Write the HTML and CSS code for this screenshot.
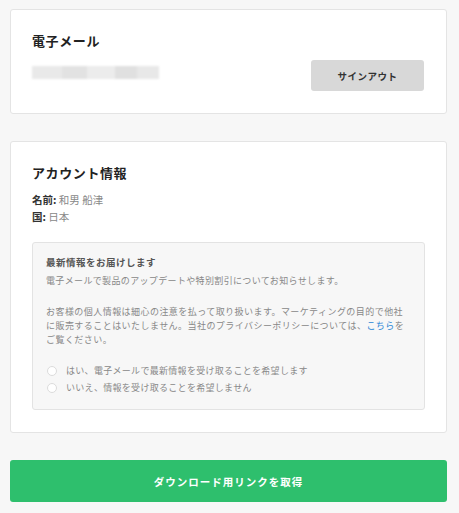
FILE: index.html
```html
<!DOCTYPE html>
<html lang="ja">
<head>
<meta charset="utf-8">
<title>アカウント</title>
<link rel="stylesheet" href="styles.css">
</head>
<body>
<main class="page">
  <section class="card">
    <h2 class="card-title">電子メール</h2>
    <div class="email-row">
      <div class="email-blur" aria-label="メールアドレス（非表示）">
        <span class="b1"></span><span class="b2"></span><span class="b3"></span><span class="b4"></span><span class="b5"></span>
      </div>
      <button class="btn-signout" type="button">サインアウト</button>
    </div>
  </section>

  <section class="card card-account">
    <h2 class="card-title">アカウント情報</h2>
    <p class="info-line"><strong>名前:</strong> 和男 船津</p>
    <p class="info-line"><strong>国:</strong> 日本</p>

    <div class="news-box">
      <h3 class="news-title">最新情報をお届けします</h3>
      <p class="news-desc">電子メールで製品のアップデートや特別割引についてお知らせします。</p>
      <p class="news-privacy">お客様の個人情報は細心の注意を払って取り扱います。マーケティングの目的で他社に販売することはいたしません。当社のプライバシーポリシーについては、<a href="#" class="link">こちら</a>をご覧ください。</p>
      <label class="radio-row"><span class="radio"></span>はい、電子メールで最新情報を受け取ることを希望します</label>
      <label class="radio-row"><span class="radio"></span>いいえ、情報を受け取ることを希望しません</label>
    </div>
  </section>

  <button class="btn-download" type="button">ダウンロード用リンクを取得</button>
</main>
</body>
</html>
```

FILE: styles.css
```css
* { box-sizing: border-box; }

html, body {
  margin: 0;
  padding: 0;
  background: #f7f7f7;
}

body {
  font-family: "Noto Sans CJK JP", "Noto Sans", sans-serif;
  color: #222;
}

.page {
  width: 437px;
  margin-left: 10px;
  padding-top: 9px;
  display: flex;
  flex-direction: column;
}

.card {
  background: #fff;
  border: 1px solid #e4e4e4;
  border-radius: 3px;
  padding: 21px 21px 22px 21px;
}

.card-account {
  margin-top: 27px;
}

.card-title {
  margin: 0 0 9px 0;
  font-size: 13px;
  line-height: 20px;
  font-weight: 700;
  letter-spacing: 0.6px;
  color: #222;
}

.email-row {
  display: flex;
  justify-content: space-between;
  align-items: flex-start;
}

.email-blur {
  margin-top: 6px;
  width: 127px;
  height: 13px;
  display: flex;
  filter: blur(0.8px);
}
.email-blur span { height: 100%; }
.b1 { width: 30px; background: #e9e9e9; }
.b2 { width: 25px; background: #e2e2e2; }
.b3 { width: 28px; background: #ececec; }
.b4 { width: 22px; background: #e0e0e0; }
.b5 { width: 22px; background: #e8e8e8; }

.btn-signout {
  width: 113px;
  height: 31px;
  margin-right: 1px;
  border: none;
  border-radius: 3px;
  background: #d8d8d8;
  color: #333;
  font-family: inherit;
  font-size: 9.5px;
  font-weight: 700;
  letter-spacing: 0.5px;
  padding: 0;
}

.card-account .card-title {
  margin-bottom: 8px;
}

.info-line {
  margin: 0;
  font-size: 10.5px;
  line-height: 17px;
  color: #888;
}
.info-line strong {
  color: #333;
  font-weight: 700;
}

.news-box {
  margin-top: 17px;
  background: #f7f7f7;
  border: 1px solid #e3e3e3;
  border-radius: 3px;
  padding: 12px 13px 13px 13px;
  color: #888;
}

.news-title {
  margin: 0 0 4px 0;
  font-size: 9.5px;
  line-height: 15px;
  font-weight: 700;
  letter-spacing: 0.5px;
  color: #555;
}

.news-desc {
  margin: 0 0 17px 0;
  font-size: 9px;
  line-height: 14px;
  letter-spacing: 0.35px;
}

.news-privacy {
  margin: 0 0 15px 0;
  font-size: 9px;
  line-height: 14px;
  letter-spacing: 0.45px;
}

.link {
  color: #2a86d6;
  text-decoration: none;
}

.radio-row {
  display: flex;
  align-items: center;
  font-size: 9px;
  line-height: 17px;
  letter-spacing: 0.3px;
  color: #888;
}

.radio {
  width: 10px;
  height: 10px;
  border-radius: 50%;
  background: #fff;
  border: 1px solid #dcdcdc;
  margin: 0 9px 0 1px;
  flex: none;
}

.btn-download {
  margin-top: 27px;
  height: 42px;
  width: 100%;
  border: none;
  border-radius: 3px;
  background: #2ebf6d;
  color: #fff;
  font-family: inherit;
  font-size: 10.5px;
  font-weight: 700;
  letter-spacing: 1px;
  padding: 0;
}
```
